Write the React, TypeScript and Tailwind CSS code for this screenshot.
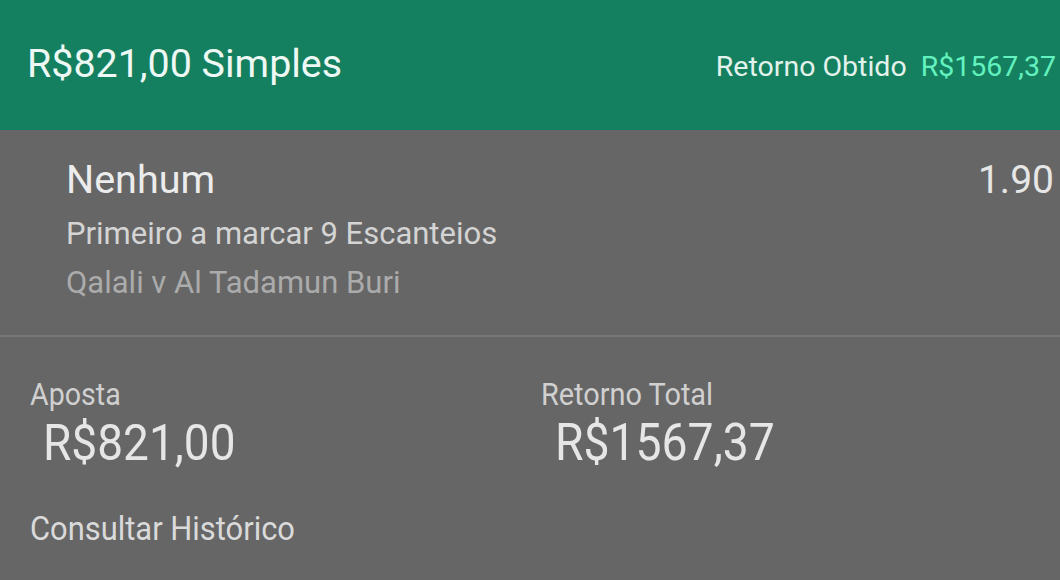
import React from 'react';

const BetSummary: React.FC = () => {
  return (
    <div className="w-[1060px] h-[580px] overflow-hidden bg-[#666666] font-['Roboto','Noto_Sans',sans-serif]">
      {/* header */}
      <div className="h-[130px] bg-[#158060] flex items-center justify-between pl-[27px] pr-[4px]">
        <div className="text-[39.4px] text-[#eef8f4] leading-none pb-[2px]">R$821,00 Simples</div>
        <div className="flex items-center gap-[14px] text-[28.5px] leading-none pt-[4px]">
          <span className="text-[#e3f3ec]">Retorno Obtido</span>
          <span className="text-[#63f2bf]">R$1567,37</span>
        </div>
      </div>

      {/* selection */}
      <div className="h-[207px] border-b-2 border-[#787878] pl-[66px] pr-[6px] pt-[28px]">
        <div className="flex justify-between items-start">
          <div className="flex flex-col">
            <div className="text-[39.5px] leading-[44px] text-[#ececec]">Nenhum</div>
            <div className="text-[31px] leading-[50px] text-[#d4d4d4] mt-[7px]">Primeiro a marcar 9 Escanteios</div>
            <div className="text-[31px] leading-[48px] text-[#ababab]">Qalali v Al Tadamun Buri</div>
          </div>
          <div className="text-[39px] leading-[44px] text-[#e6e6e6]">1.90</div>
        </div>
      </div>

      {/* stake / return */}
      <div className="grid grid-cols-2 pt-[40px]">
        <div className="pl-[30px]">
          <div className="text-[28.6px] leading-[34px] text-[#d0d0d0] scale-y-110 origin-left">Aposta</div>
          <div className="pl-[13px] mt-[3px] text-[46px] leading-[56px] text-[#e6e6e6] scale-y-110 origin-left">R$821,00</div>
        </div>
        <div className="pl-[11px]">
          <div className="text-[28.9px] leading-[34px] text-[#d0d0d0] scale-y-110 origin-left">Retorno Total</div>
          <div className="pl-[14px] mt-[3px] text-[46.3px] leading-[56px] text-[#e6e6e6] scale-y-110 origin-left">R$1567,37</div>
        </div>
      </div>
      <div className="pl-[30px] pt-[37px] text-[30.9px] leading-[40px] text-[#dadada] scale-y-110 origin-left">Consultar Histórico</div>
    </div>
  );
};

export default function App() {
  return <BetSummary />;
}
